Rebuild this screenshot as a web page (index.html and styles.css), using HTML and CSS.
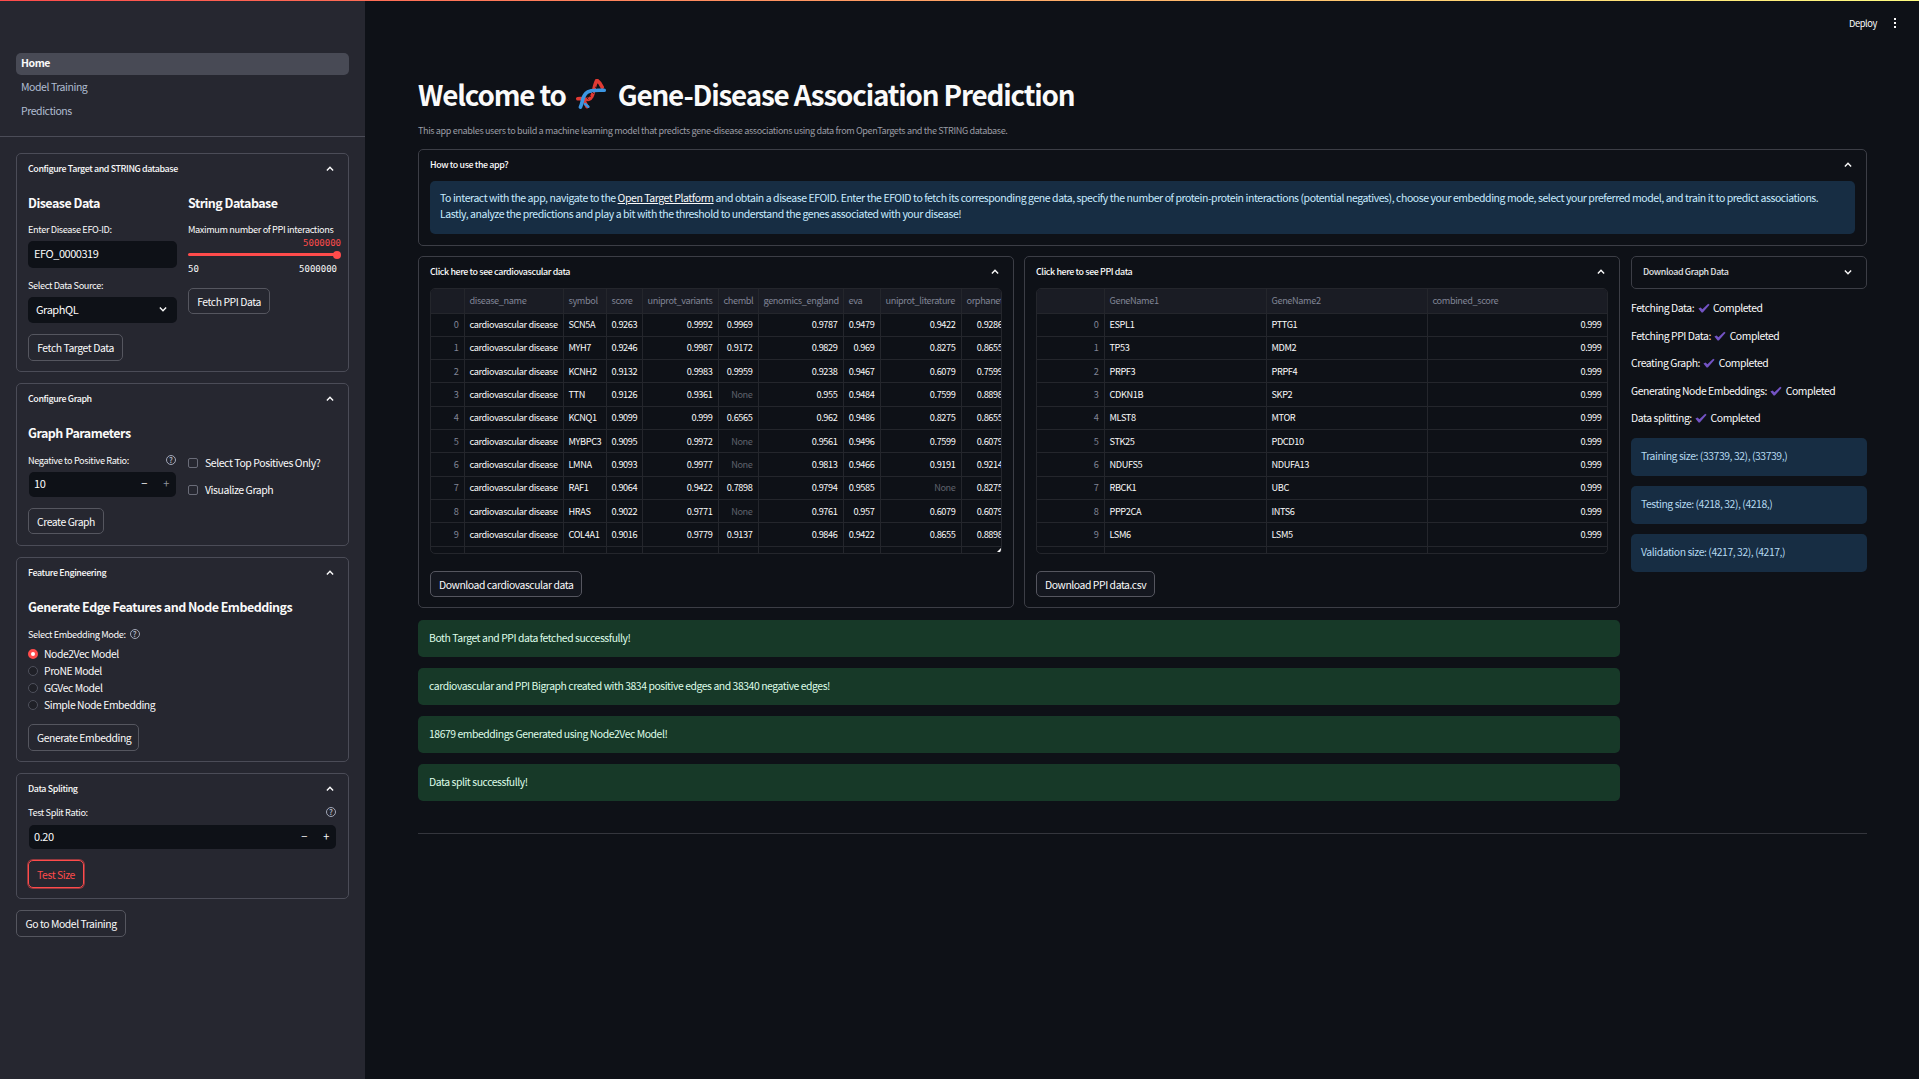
FILE: index.html
```html
<!DOCTYPE html>
<html lang="en">
<head>
<meta charset="utf-8">
<title>Gene-Disease Association Prediction</title>
<link rel="stylesheet" href="styles.css">
</head>
<body>
<svg class="defs" width="0" height="0" aria-hidden="true">
  <symbol id="up" viewBox="0 0 10 10"><path d="M2.4 6.2 5 3.6 7.6 6.2" fill="none" stroke="currentColor" stroke-width="1.2"/></symbol>
  <symbol id="down" viewBox="0 0 10 10"><path d="M2.4 3.8 5 6.4 7.6 3.8" fill="none" stroke="currentColor" stroke-width="1.2"/></symbol>
  <symbol id="tick" viewBox="0 0 12 10"><path d="M0.4 5.4 2.6 4.4 4.4 6.2 10.2 0.8 11.6 1.8 4.8 9.6 3.6 9.6Z" fill="#7353c4"/></symbol>
</svg>
<div class="topline"></div>
<aside class="sidebar">
  <nav class="nav">
    <a class="nav-item active">Home</a>
    <a class="nav-item">Model Training</a>
    <a class="nav-item">Predictions</a>
  </nav>
  <div class="side-body">
    <section class="exp e1">
      <div class="exp-head"><span>Configure Target and STRING database</span><svg class="chev"><use href="#up"/></svg></div>
      <div class="cols">
        <div class="col-a">
          <h3>Disease Data</h3>
          <div class="lbl">Enter Disease EFO-ID:</div>
          <div class="field">EFO_0000319</div>
          <div class="lbl lbl-next">Select Data Source:</div>
          <div class="field select"><span>GraphQL</span><svg class="chev"><use href="#down"/></svg></div>
          <button class="btn btn-a">Fetch Target Data</button>
        </div>
        <div class="col-b">
          <h3>String Database</h3>
          <div class="lbl">Maximum number of PPI interactions</div>
          <div class="slider-val">5000000</div>
          <div class="slider"><i class="thumb"></i></div>
          <div class="slider-range"><span>50</span><span>5000000</span></div>
          <button class="btn btn-b">Fetch PPI Data</button>
        </div>
      </div>
    </section>

    <section class="exp e2">
      <div class="exp-head"><span>Configure Graph</span><svg class="chev"><use href="#up"/></svg></div>
      <h3 class="h-single">Graph Parameters</h3>
      <div class="cols">
        <div class="col-a">
          <div class="lbl lbl-help"><span>Negative to Positive Ratio:</span><span class="help">?</span></div>
          <div class="field num"><span>10</span><span class="steps"><b>−</b><b class="dim">+</b></span></div>
          <button class="btn btn-c">Create Graph</button>
        </div>
        <div class="col-b checks">
          <label class="check"><i class="box"></i>Select Top Positives Only?</label>
          <label class="check"><i class="box"></i>Visualize Graph</label>
        </div>
      </div>
    </section>

    <section class="exp e3">
      <div class="exp-head"><span>Feature Engineering</span><svg class="chev"><use href="#up"/></svg></div>
      <h3 class="h-single">Generate Edge Features and Node Embeddings</h3>
      <div class="lbl lbl-inline"><span>Select Embedding Mode:</span><span class="help">?</span></div>
      <div class="radios">
        <div class="radio"><i class="dot on"></i>Node2Vec Model</div>
        <div class="radio"><i class="dot"></i>ProNE Model</div>
        <div class="radio"><i class="dot"></i>GGVec Model</div>
        <div class="radio"><i class="dot"></i>Simple Node Embedding</div>
      </div>
      <button class="btn btn-d">Generate Embedding</button>
    </section>

    <section class="exp e4">
      <div class="exp-head"><span>Data Spliting</span><svg class="chev"><use href="#up"/></svg></div>
      <div class="lbl lbl-help"><span>Test Split Ratio:</span><span class="help">?</span></div>
      <div class="field num"><span>0.20</span><span class="steps"><b>−</b><b>+</b></span></div>
      <button class="btn btn-focus">Test Size</button>
    </section>

    <button class="btn btn-go">Go to Model Training</button>
  </div>
</aside>

<main class="main">
  <header class="topbar">
    <span class="deploy">Deploy</span>
    <span class="kebab"><i></i><i></i><i></i></span>
  </header>
  <div class="content">
    <h1 class="title"><span>Welcome to</span>
      <svg class="dna" viewBox="33 28 90 94">
        <path d="M38 88C60 84 72 98 80 82C88 68 86 48 96 32C102 36 108 44 112 53" fill="none" stroke="#e03a33" stroke-width="11" stroke-linejoin="round" stroke-linecap="round"/>
        <path d="M56 92 66 112" stroke="#e03a33" stroke-width="11" stroke-linecap="round"/>
        <path d="M46 113C53 100 50 85 62 72C72 60 92 63 118 62" fill="none" stroke="#3b96e2" stroke-width="11" stroke-linecap="round"/>
        <path d="M60 104 70 112" stroke="#3b96e2" stroke-width="8" stroke-linecap="round"/>
        <path d="M72 76 78 82M81 67 87 73M90 52 96 56M64 84 70 90" stroke="#0e1117" stroke-width="2.4"/>
      </svg>
      <span>Gene-Disease Association Prediction</span></h1>
    <p class="caption">This app enables users to build a machine learning model that predicts gene-disease associations using data from OpenTargets and the STRING database.</p>

    <section class="mexp how">
      <div class="exp-head"><span>How to use the app?</span><svg class="chev"><use href="#up"/></svg></div>
      <div class="info how-info">To interact with the app, navigate to the <a class="link">Open Target Platform</a> and obtain a disease EFOID. Enter the EFOID to fetch its corresponding gene data, specify the number of protein-protein interactions (potential negatives), choose your embedding mode, select your preferred model, and train it to predict associations.<br>Lastly, analyze the predictions and play a bit with the threshold to understand the genes associated with your disease!</div>
    </section>

    <div class="grid">
      <div class="left">
        <div class="tables">
          <section class="mexp tcard">
            <div class="exp-head"><span>Click here to see cardiovascular data</span><svg class="chev"><use href="#up"/></svg></div>
            <div class="twrap">
              <table class="df df1">
                <thead><tr><th></th><th>disease_name</th><th>symbol</th><th>score</th><th>uniprot_variants</th><th>chembl</th><th>genomics_england</th><th>eva</th><th>uniprot_literature</th><th>orphanet</th></tr></thead>
                <tbody>
                  <tr><td class="ix">0</td><td>cardiovascular disease</td><td>SCN5A</td><td class="n">0.9263</td><td class="n">0.9992</td><td class="n">0.9969</td><td class="n">0.9787</td><td class="n">0.9479</td><td class="n">0.9422</td><td class="n">0.9286</td></tr>
                  <tr><td class="ix">1</td><td>cardiovascular disease</td><td>MYH7</td><td class="n">0.9246</td><td class="n">0.9987</td><td class="n">0.9172</td><td class="n">0.9829</td><td class="n">0.969</td><td class="n">0.8275</td><td class="n">0.8655</td></tr>
                  <tr><td class="ix">2</td><td>cardiovascular disease</td><td>KCNH2</td><td class="n">0.9132</td><td class="n">0.9983</td><td class="n">0.9959</td><td class="n">0.9238</td><td class="n">0.9467</td><td class="n">0.6079</td><td class="n">0.7599</td></tr>
                  <tr><td class="ix">3</td><td>cardiovascular disease</td><td>TTN</td><td class="n">0.9126</td><td class="n">0.9361</td><td class="n none">None</td><td class="n">0.955</td><td class="n">0.9484</td><td class="n">0.7599</td><td class="n">0.8898</td></tr>
                  <tr><td class="ix">4</td><td>cardiovascular disease</td><td>KCNQ1</td><td class="n">0.9099</td><td class="n">0.999</td><td class="n">0.6565</td><td class="n">0.962</td><td class="n">0.9486</td><td class="n">0.8275</td><td class="n">0.8655</td></tr>
                  <tr><td class="ix">5</td><td>cardiovascular disease</td><td>MYBPC3</td><td class="n">0.9095</td><td class="n">0.9972</td><td class="n none">None</td><td class="n">0.9561</td><td class="n">0.9496</td><td class="n">0.7599</td><td class="n">0.6079</td></tr>
                  <tr><td class="ix">6</td><td>cardiovascular disease</td><td>LMNA</td><td class="n">0.9093</td><td class="n">0.9977</td><td class="n none">None</td><td class="n">0.9813</td><td class="n">0.9466</td><td class="n">0.9191</td><td class="n">0.9214</td></tr>
                  <tr><td class="ix">7</td><td>cardiovascular disease</td><td>RAF1</td><td class="n">0.9064</td><td class="n">0.9422</td><td class="n">0.7898</td><td class="n">0.9794</td><td class="n">0.9585</td><td class="n none">None</td><td class="n">0.8275</td></tr>
                  <tr><td class="ix">8</td><td>cardiovascular disease</td><td>HRAS</td><td class="n">0.9022</td><td class="n">0.9771</td><td class="n none">None</td><td class="n">0.9761</td><td class="n">0.957</td><td class="n">0.6079</td><td class="n">0.6079</td></tr>
                  <tr><td class="ix">9</td><td>cardiovascular disease</td><td>COL4A1</td><td class="n">0.9016</td><td class="n">0.9779</td><td class="n">0.9137</td><td class="n">0.9846</td><td class="n">0.9422</td><td class="n">0.8655</td><td class="n">0.8898</td></tr>
                  <tr><td></td><td></td><td></td><td></td><td></td><td></td><td></td><td></td><td></td><td></td></tr>
                </tbody>
              </table>
              <i class="corner"></i>
            </div>
            <button class="btn btn-dl">Download cardiovascular data</button>
          </section>

          <section class="mexp tcard">
            <div class="exp-head"><span>Click here to see PPI data</span><svg class="chev"><use href="#up"/></svg></div>
            <div class="twrap">
              <table class="df df2">
                <thead><tr><th></th><th>GeneName1</th><th>GeneName2</th><th>combined_score</th></tr></thead>
                <tbody>
                  <tr><td class="ix">0</td><td>ESPL1</td><td>PTTG1</td><td class="n">0.999</td></tr>
                  <tr><td class="ix">1</td><td>TP53</td><td>MDM2</td><td class="n">0.999</td></tr>
                  <tr><td class="ix">2</td><td>PRPF3</td><td>PRPF4</td><td class="n">0.999</td></tr>
                  <tr><td class="ix">3</td><td>CDKN1B</td><td>SKP2</td><td class="n">0.999</td></tr>
                  <tr><td class="ix">4</td><td>MLST8</td><td>MTOR</td><td class="n">0.999</td></tr>
                  <tr><td class="ix">5</td><td>STK25</td><td>PDCD10</td><td class="n">0.999</td></tr>
                  <tr><td class="ix">6</td><td>NDUFS5</td><td>NDUFA13</td><td class="n">0.999</td></tr>
                  <tr><td class="ix">7</td><td>RBCK1</td><td>UBC</td><td class="n">0.999</td></tr>
                  <tr><td class="ix">8</td><td>PPP2CA</td><td>INTS6</td><td class="n">0.999</td></tr>
                  <tr><td class="ix">9</td><td>LSM6</td><td>LSM5</td><td class="n">0.999</td></tr>
                  <tr><td></td><td></td><td></td><td></td></tr>
                </tbody>
              </table>
            </div>
            <button class="btn btn-dl">Download PPI data.csv</button>
          </section>
        </div>
        <div class="alerts">
          <div class="ok">Both Target and PPI data fetched successfully!</div>
          <div class="ok">cardiovascular and PPI Bigraph created with 3834 positive edges and 38340 negative edges!</div>
          <div class="ok">18679 embeddings Generated using Node2Vec Model!</div>
          <div class="ok">Data split successfully!</div>
        </div>
      </div>
      <div class="right">
        <section class="mexp dl-exp">
          <div class="exp-head"><span>Download Graph Data</span><svg class="chev"><use href="#down"/></svg></div>
        </section>
        <ul class="status">
          <li>Fetching Data: <svg class="tick"><use href="#tick"/></svg> Completed</li>
          <li>Fetching PPI Data: <svg class="tick"><use href="#tick"/></svg> Completed</li>
          <li>Creating Graph: <svg class="tick"><use href="#tick"/></svg> Completed</li>
          <li>Generating Node Embeddings: <svg class="tick"><use href="#tick"/></svg> Completed</li>
          <li>Data splitting: <svg class="tick"><use href="#tick"/></svg> Completed</li>
        </ul>
        <div class="sizes">
          <div class="info size">Training size: (33739, 32), (33739,)</div>
          <div class="info size">Testing size: (4218, 32), (4218,)</div>
          <div class="info size">Validation size: (4217, 32), (4217,)</div>
        </div>
      </div>
    </div>
    <hr class="rule">
  </div>
</main>
</body>
</html>
```
FILE: styles.css
```css
* { box-sizing: border-box; letter-spacing: -.042em; }
html, body { margin: 0; height: 100%; }
body {
  display: flex;
  height: 1079px;
  overflow: hidden;
  background: #0e1117;
  color: #fafafa;
  font-family: "Noto Sans CJK SC", "Noto Sans", sans-serif;
  font-size: 10.5px;
  line-height: 14px;
}
.defs { position: absolute; }
.topline {
  position: absolute; left: 0; top: 0; width: 100%; height: 1px;
  background: linear-gradient(90deg, #ff4b4b, #fffd80);
}
h1, h3, p { margin: 0; }
button { font: inherit; color: inherit; background: transparent; cursor: pointer; }

/* sidebar */
.sidebar { width: 365px; flex: none; background: #262730; height: 100%; padding-top: 53px; }
.nav { display: flex; flex-direction: column; gap: 2px; padding: 0 16px 13px; border-bottom: 1px solid #4b4c57; }
.nav-item { height: 22px; line-height: 20px; padding: 0 5px; border-radius: 5px; color: #b0bdd0; }
.nav-item.active { background: #484a55; color: #fafafa; font-weight: 700; }
.side-body { padding: 16px 16px 0; display: flex; flex-direction: column; align-items: flex-start; gap: 11px; }

.exp { width: 333px; border: 1px solid #4b4c57; border-radius: 5px; padding: 0 11px; }
.exp-head { display: flex; justify-content: space-between; align-items: center; height: 31px; padding-bottom: 2px; font-size: 8.9px; font-weight: 500; }
.chev { width: 12px; height: 12px; margin-right: 1px; color: #fafafa; flex: none; }
.cols { display: flex; gap: 11px; }
.col-a { width: 149px; flex: none; }
.col-b { width: 153px; flex: none; }
h3 { font-size: 12.5px; line-height: 20px; font-weight: 700; }
.e1 { height: 219px; }
.e1 h3 { margin: 8px 0 10px; }
.lbl { font-size: 9.2px; line-height: 13px; height: 14px; }
.field { height: 27px; line-height: 25px; background: #0e1117; border-radius: 5px; padding: 0 6px; margin-top: 4px; font-size: 11px; }
.lbl-next { margin-top: 11px; }
.select { display: flex; justify-content: space-between; align-items: center; padding: 0 8px 2px; height: 26px; }
.select .chev { margin-right: 0; }
.btn { display: block; height: 27px; padding: 0 8px; border: 1px solid #55565f; border-radius: 5px; font-size: 10.4px; line-height: 25px; white-space: nowrap; }
.btn-a { margin-top: 11px; width: 95px; }
.slider-val { font-family: "DejaVu Sans Mono", monospace; font-size: 9px; line-height: 12px; color: #ff4b4b; text-align: right; letter-spacing: 0; }
.slider { height: 3px; background: #ff4b4b; border-radius: 2px; margin: 4px 4px 0 0; position: relative; }
.thumb { position: absolute; right: -4px; top: -2.5px; width: 8px; height: 8px; border-radius: 50%; background: #ff4b4b; }
.slider-range { display: flex; justify-content: space-between; font-family: "DejaVu Sans Mono", monospace; font-size: 9px; line-height: 12px; margin: 7px 4px 0 0; }
.slider-range span { letter-spacing: 0; }
.btn-b { margin-top: 13px; width: 82px; height: 26px; }

.e2 { height: 163px; }
.h-single { margin: 8px 0 10px; }
.lbl-help { display: flex; justify-content: space-between; align-items: center; padding-right: 1px; }
.help { width: 10px; height: 10px; border: 1px solid #a3a8b8; border-radius: 50%; color: #a3a8b8; font-size: 7.5px; line-height: 8px; text-align: center; font-weight: 700; flex: none; letter-spacing: 0; }
.num { display: flex; justify-content: space-between; height: 25px; line-height: 22px; margin: 5px 1px 0; padding: 0 5px; }
.steps { display: flex; gap: 12px; font-weight: 400; }
.steps b { width: 10px; text-align: center; font-weight: 400; }
.steps .dim { color: #8f929c; }
.btn-c { margin-top: 11px; width: 76px; height: 26px; }
.checks { display: flex; flex-direction: column; gap: 13px; padding-top: 3px; }
.check { display: flex; align-items: center; gap: 7px; font-size: 10.5px; }
.box { width: 10px; height: 10px; border: 1px solid #6a6c78; border-radius: 2px; background: #262730; flex: none; }

.e3 { height: 205px; }
.lbl-inline { display: flex; align-items: center; gap: 4px; }
.radios { display: flex; flex-direction: column; gap: 3px; margin-top: 6px; }
.radio { height: 14px; display: flex; align-items: center; gap: 6px; font-size: 10.4px; }
.dot { width: 10px; height: 10px; border-radius: 50%; border: 1px solid #4f515c; background: #1f2027; flex: none; }
.dot.on { background: #ff4b4b; border: 3px solid #ff4b4b; }
.dot.on::after { content: ""; display: block; width: 4px; height: 4px; border-radius: 50%; background: #fff; }
.btn-d { margin-top: 12px; width: 111px; }

.e4 { height: 126px; }
.e4 .num { margin-top: 6px; height: 24px; }
.btn-focus { margin-top: 11px; width: 56px; height: 28px; border: 1.5px solid #ff4b4b; color: #ff4b4b; box-shadow: 0 0 0 1px rgba(255, 75, 75, .5); }
.btn-go { width: 110px; height: 27px; }

/* main */
.main { flex: 1; min-width: 0; display: flex; flex-direction: column; padding: 0 0 0 53px; }
.topbar { height: 46px; flex: none; display: flex; justify-content: flex-end; align-items: center; gap: 17px; padding-right: 23px; font-size: 9.3px; }
.kebab { display: flex; flex-direction: column; gap: 2px; width: 2px; }
.kebab i { width: 2px; height: 2px; background: #fafafa; }
.content { width: 1449px; }
.title { font-size: 27.8px; line-height: 40px; font-weight: 600; height: 40px; margin-top: 28px; display: flex; align-items: center; gap: 11px; white-space: nowrap; }
.dna { width: 30px; height: 31px; flex: none; margin: 0 1px 0 -1px; }
.caption { margin-top: 10px; font-size: 9.1px; line-height: 12px; color: #9a9ca4; }
.mexp { border: 1px solid #3c3e46; border-radius: 5px; padding: 0 11px; }
.how { margin-top: 13px; height: 97px; }
.info { background: #172d43; color: #c7ebff; border-radius: 5px; }
.how-info { padding: 9px 10px 0; line-height: 16px; font-size: 10.5px; height: 53px; white-space: nowrap; }
.link { color: #fafafa; text-decoration: underline; }

.grid { display: flex; gap: 11px; margin-top: 10px; }
.left { width: 1202px; flex: none; }
.tables { display: flex; gap: 10px; }
.tcard { width: 596px; height: 352px; }
.twrap { position: relative; height: 266px; overflow: hidden; border: 1px solid #24262c; border-radius: 5px; }
.df { border-collapse: collapse; table-layout: fixed; font-size: 9.2px; }
.df th, .df td { height: 23.33px; padding: 0 5px 1px; border-right: 1px solid #24262c; border-bottom: 1px solid #24262c; white-space: nowrap; overflow: hidden; text-align: left; font-weight: 400; line-height: 14px; }
.df th { height: 24px; background: #1a1c24; color: #808495; }
.df .n { text-align: right; }
.df .ix { text-align: right; color: #808495; }
.df .none { color: #5f626c; }
.df1 { width: 577px; }
.df2 { width: 570px; }
.df1 th:nth-child(1) { width: 33px; }
.df1 th:nth-child(2) { width: 99px; }
.df1 th:nth-child(3) { width: 43px; }
.df1 th:nth-child(4) { width: 36px; }
.df1 th:nth-child(5) { width: 76px; }
.df1 th:nth-child(6) { width: 40px; }
.df1 th:nth-child(7) { width: 85px; }
.df1 th:nth-child(8) { width: 37px; }
.df1 th:nth-child(9) { width: 81px; }
.df1 th:nth-child(10) { width: 47px; }
.df2 th:nth-child(1) { width: 67px; }
.df2 th:nth-child(2) { width: 162px; }
.df2 th:nth-child(3) { width: 161px; }
.df2 th:nth-child(4) { width: 180px; }
.corner { position: absolute; right: 0; bottom: 1px; width: 4px; height: 4px; background: #fafafa; clip-path: polygon(100% 0, 100% 100%, 0 100%); }
.btn-dl { margin-top: 17px; height: 26px; background: #14171f; width: auto; }

.alerts { display: flex; flex-direction: column; gap: 11px; margin-top: 12px; }
.ok { height: 37px; line-height: 35px; padding: 0 11px; background: #173928; color: #dffde9; border-radius: 5px; font-size: 10.4px; }

.right { width: 236px; flex: none; }
.dl-exp { height: 33px; }
.dl-exp .exp-head { color: #e0e1e4; }
.status { list-style: none; margin: 6px 0 0; padding: 0; }
.status li { height: 27.6px; line-height: 26px; font-size: 10.4px; display: block; white-space: nowrap; }
.tick { width: 12px; height: 10px; margin: 0 1.5px; vertical-align: -1px; }
.sizes { display: flex; flex-direction: column; gap: 10px; margin-top: 5px; }
.size { height: 38px; line-height: 36px; padding: 0 10px; font-size: 10.4px; color: #b5d9f0; }
.rule { border: 0; border-top: 1px solid #34363d; margin: 32px 0 0; height: 0; }
```
